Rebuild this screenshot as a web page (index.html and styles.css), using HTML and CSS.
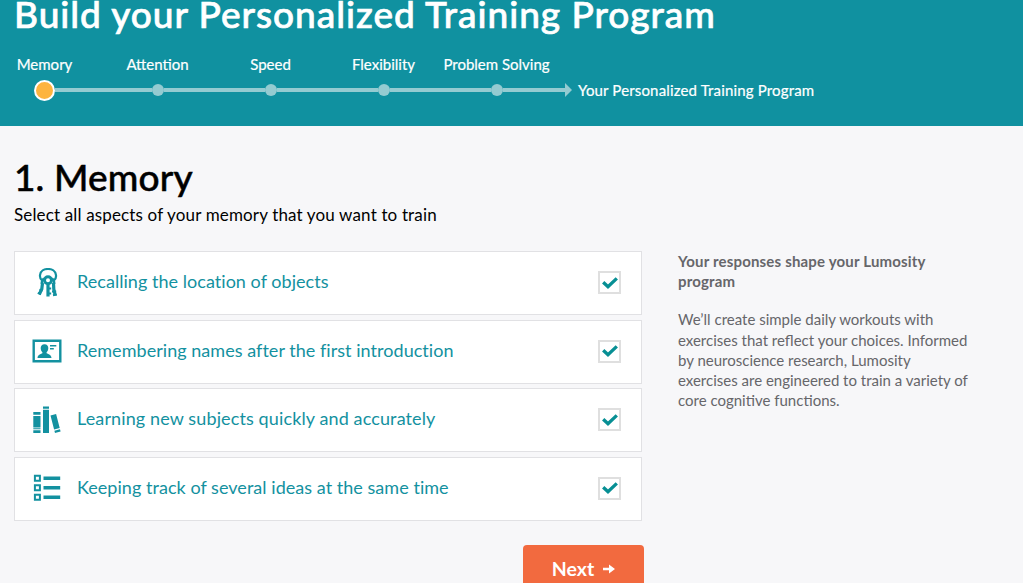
FILE: index.html
```html
<!DOCTYPE html>
<html lang="en">
<head>
  <meta charset="UTF-8" />
  <meta name="viewport" content="width=device-width, initial-scale=1" />
  <title>Build your Personalized Training Program</title>
  <link rel="stylesheet" href="styles.css">
</head>
<body>

  <header class="header">
    <h1>Build your Personalized Training Program</h1>

    <div class="steps">
      <span>Memory</span>
      <span>Attention</span>
      <span>Speed</span>
      <span>Flexibility</span>
      <span>Problem Solving</span>
    </div>

    <div class="track">
      <i class="dot active"></i><i class="line"></i>
      <i class="dot"></i><i class="line"></i>
      <i class="dot"></i><i class="line"></i>
      <i class="dot"></i><i class="line"></i>
      <i class="dot"></i><i class="line end"></i>
      <i class="arrow"></i>
      <span class="goal">Your Personalized Training Program</span>
    </div>
  </header>

  <main class="content">
    <h2>1. Memory</h2>
    <p class="intro">Select all aspects of your memory that you want to train</p>

    <div class="columns">
      <form class="survey">
        <label class="option">
          <!-- Keys -->
          <svg class="icon" viewBox="0 0 30 30" fill="none" stroke="#1391a0">
            <path d="M10 12.3C8.2 11 7.8 9 8 7.2C8.4 3 12.3 1 16 1S23.6 3 24 7.2C24.2 9 23.8 11 22 12.3" stroke-width="2.2" />
            <path d="M12 10.6C10 12 9.6 13.5 9.8 16M20 10.6C22 12 22.4 13.5 22.2 16" stroke-width="2.4" />
            <circle cx="16" cy="12.3" r="3.5" stroke-width="3" />
            <path d="M16 16.5v12M10.5 15L9.8 21L7.2 26.5M21.5 15L21.8 21L23.2 27.5" stroke-width="3.2" />
            <path d="M16 20.5h3.2M16 25.5h3.2M7.4 21.6l3.2 1M5.8 24.8l3 1.4M20 23.4h4.2M21 27.2l3.8-.8" stroke-width="2" />
          </svg>
          <span class="name">Recalling the location of objects</span>
          <span class="check"><svg viewBox="0 0 16 14"><path d="M1.2 6.2L6 10.8L14.8 2.4" /></svg></span>
        </label>

        <label class="option">
          <!-- Name card -->
          <svg class="icon" viewBox="0 0 30 30" fill="#1391a0">
            <path fill-rule="evenodd" d="M.5 3.5h29v23H.5zM2.9 5.9v18.2h24.2V5.9z" />
            <path d="M12.5 8.2c2.6 0 3.9 1.7 3.8 4c-.1 1.8-.8 3.2-1.7 4v1c1.8 1 4.7 1.1 4.9 4.8H5.5c.2-3.7 3.1-3.8 4.9-4.8v-1c-.9-.8-1.6-2.2-1.7-4c-.1-2.3 1.2-4 3.8-4z" />
            <path d="M18 9h6.3v1.5H18zM18 12h3.8v1.5H18z" />
          </svg>
          <span class="name">Remembering names after the first introduction</span>
          <span class="check"><svg viewBox="0 0 16 14"><path d="M1.2 6.2L6 10.8L14.8 2.4" /></svg></span>
        </label>

        <label class="option">
          <!-- Books -->
          <svg class="icon" viewBox="0 0 30 30" fill="#1391a0">
            <path d="M1.3 7h7.2v2.8H1.3zM1.3 11h7.2v11.4H1.3zM1.3 23.2h7.2v1.1H1.3zM1.3 25.2h7.2V28H1.3z" />
            <path d="M11 1.5h6v2.2h-6zM11 4.8h6V28h-6z" />
            <path d="M18.5 10.6l5.6-1.5l3.6 14l-5.6 1.5zM22.4 25.8l5.6-1.5l.6 2.2l-5.6 1.5z" />
          </svg>
          <span class="name wide">Learning new subjects quickly and accurately</span>
          <span class="check"><svg viewBox="0 0 16 14"><path d="M1.2 6.2L6 10.8L14.8 2.4" /></svg></span>
        </label>

        <label class="option">
          <!-- List -->
          <svg class="icon" viewBox="0 0 30 30" fill="none" stroke="#1391a0">
            <path d="M2.9 2.7h5v5h-5zM2.9 12.2h5v5h-5zM2.9 21.7h5v5h-5z" stroke-width="2" />
            <path d="M11.5 5.3h16.7M11.5 14.8h16.7M11.5 24.3h16.7" stroke-width="3.6" />
          </svg>
          <span class="name">Keeping track of several ideas at the same time</span>
          <span class="check"><svg viewBox="0 0 16 14"><path d="M1.2 6.2L6 10.8L14.8 2.4" /></svg></span>
        </label>

        <button type="button" class="next">
          Next
          <svg viewBox="0 0 12 10"><path d="M0 3.8h6V.5L12 5L6 9.5V6.2H0z" /></svg>
        </button>
      </form>

      <aside class="sidebar">
        <h3>Your responses shape your Lumosity<br>program</h3>
        <p>We’ll create simple daily workouts with<br>exercises that reflect your choices. Informed<br>by neuroscience research, Lumosity<br>exercises are engineered to train a variety of<br>core cognitive functions.</p>
      </aside>
    </div>
  </main>

</body>
</html>
```

FILE: styles.css
```css
* { margin: 0; padding: 0; box-sizing: border-box; }

body {
  height: 583px;
  overflow: hidden;
  font-family: Lato, "Open Sans", sans-serif;
  background: #f7f7f9;
  color: #000;
}

.header {
  height: 126px;
  background: #1091a0;
  color: #fff;
}

h1 {
  padding-left: 14px;
  font-size: 37px;
  line-height: 28px;
  font-weight: 500;
  letter-spacing: 0.97px;
  white-space: nowrap;
  -webkit-text-stroke: 0.7px #fff;
}

.steps {
  display: grid;
  grid-template-columns: repeat(5, 113px);
  margin-left: -12px;
  padding-top: 26px;
  font-size: 15px;
  line-height: 20px;
  text-align: center;
  white-space: nowrap;
  -webkit-text-stroke: 0.2px #fff;
}

.track {
  display: flex;
  align-items: center;
  height: 20px;
  margin-top: 6px;
  padding-left: 34px;
}

.dot {
  width: 12px;
  height: 12px;
  border-radius: 50%;
  background: #94cbd1;
}

.dot.active {
  width: 21px;
  height: 21px;
  border: 2px solid #fff;
  background: #fdb43f;
}

.line {
  width: 101px;
  height: 4px;
  background: #94cbd1;
}

.dot.active + .line { width: 97px; }

.line.end { width: 62px; }

.arrow {
  border: 7px solid transparent;
  border-left-color: #94cbd1;
  border-right-width: 0;
}

.goal {
  margin-left: 6px;
  font-size: 15px;
  line-height: 20px;
  letter-spacing: 0.16px;
  -webkit-text-stroke: 0.2px #fff;
}

.content { padding: 31px 14px 0; }

h2 {
  font-size: 37px;
  line-height: 40px;
  font-weight: 500;
  letter-spacing: 0.15px;
  -webkit-text-stroke: 0.5px #000;
}

.intro {
  margin-top: 7px;
  font-size: 17px;
  line-height: 22px;
  letter-spacing: 0.15px;
}

.columns {
  display: flex;
  margin-top: 25px;
}

.survey { width: 628px; }

.option {
  display: flex;
  align-items: center;
  height: 64px;
  margin-bottom: 4.5px;
  padding: 0 20px 1px 17px;
  background: #fff;
  border: 1px solid #e1e1e4;
}

.icon {
  width: 30px;
  height: 30px;
  margin-right: 15px;
}

.name {
  flex: 1;
  padding-bottom: 3px;
  color: #1391a0;
  font-size: 18px;
  letter-spacing: 0.04px;
}

.name.wide { letter-spacing: 0.12px; }

.check {
  display: flex;
  align-items: center;
  justify-content: center;
  width: 23px;
  height: 23px;
  border: 2px solid #dfdfdf;
}

.check svg {
  width: 16px;
  height: 14px;
  fill: none;
  stroke: #078f94;
  stroke-width: 3.3;
  flex-shrink: 0;
}

.next {
  display: flex;
  align-items: center;
  justify-content: center;
  gap: 9px;
  width: 121px;
  height: 48px;
  margin: 24px 0 0 509px;
  border: none;
  border-radius: 4px;
  background: #f26a3f;
  color: #fff;
  font: 700 19.5px Lato, sans-serif;
}

.next svg {
  width: 12px;
  height: 10px;
  fill: #fff;
}

.sidebar {
  margin-left: 36px;
  color: #66666a;
  font-size: 15px;
  line-height: 20.2px;
  white-space: nowrap;
}

.sidebar h3 {
  font-size: 15px;
  font-weight: 700;
  letter-spacing: 0.18px;
}

.sidebar p { margin-top: 18px; }
```
